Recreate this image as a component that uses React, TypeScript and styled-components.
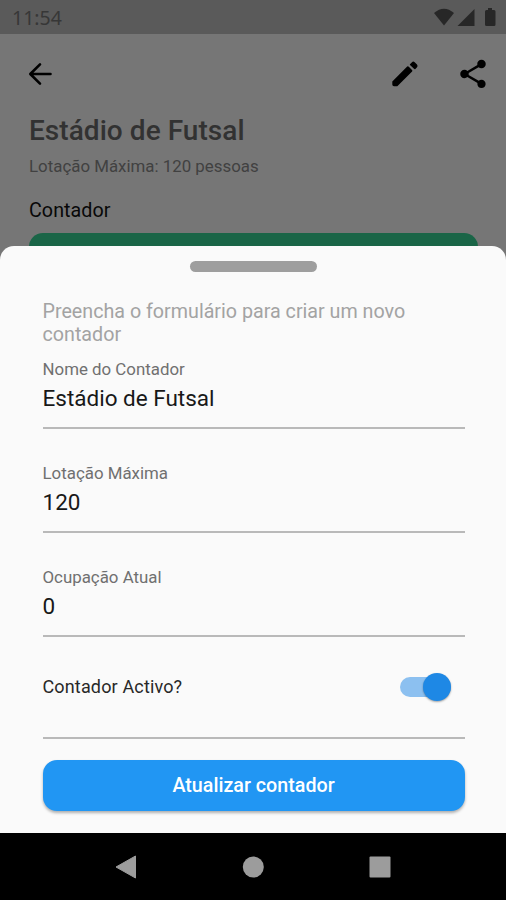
import React from "react";
import styled, { createGlobalStyle } from "styled-components";

const GlobalStyle = createGlobalStyle`
  * { box-sizing: border-box; }
  body { margin: 0; background: #767676; }
`;

const Screen = styled.div`
  width: 506px;
  height: 900px;
  display: flex;
  flex-direction: column;
  overflow: hidden;
  background: #767676;
  font-family: Roboto, sans-serif;
  white-space: nowrap;
`;

const StatusBar = styled.header`
  height: 34px;
  flex: none;
  display: flex;
  align-items: center;
  justify-content: space-between;
  padding: 2px 9px 0 12px;
  background: #5a5a5a;
  color: #373737;
`;

const Clock = styled.span`
  font: 400 19.5px/32px "Noto Sans", sans-serif;
`;

const StatusIcons = styled.svg`
  width: 63px;
  height: 20px;
  fill: #272727;
`;

const AppBar = styled.nav`
  height: 79px;
  flex: none;
  display: flex;
  align-items: center;
  padding: 0 16px 0 23px;
`;

const Icon = styled.svg`
  width: 34px;
  height: 34px;
  fill: #000;
`;

const Actions = styled.div`
  display: flex;
  gap: 34px;
  margin-left: auto;
`;

const Venue = styled.section`
  height: 134px;
  flex: none;
  padding: 1px 28px 0 29px;
`;

const Title = styled.h1`
  margin: 0;
  color: #323232;
  font-size: 28px;
  font-weight: 500;
  line-height: 34px;
  letter-spacing: 0.05px;
`;

const Subtitle = styled.p`
  margin: 7px 0 0;
  color: #414141;
  font-size: 16.87px;
  line-height: 22px;
`;

const SectionLabel = styled.h2`
  margin: 22px 0 0;
  color: #080808;
  font-size: 19.7px;
  font-weight: 400;
  line-height: 24px;
  letter-spacing: 0.05px;
`;

const CounterCard = styled.div`
  height: 14px;
  margin-top: 10px;
  border-radius: 14px 14px 0 0;
  background: #1a6547;
`;

const Sheet = styled.main`
  height: 587px;
  flex: none;
  margin-top: -1px;
  padding: 15px 41.5px 0 42.5px;
  border-radius: 14px 14px 0 0;
  background: #fafafa;
`;

const Handle = styled.div`
  width: 127px;
  height: 11px;
  margin: 0 auto;
  border-radius: 6px;
  background: #9e9e9e;
`;

const Intro = styled.p`
  margin: 28px 0 0;
  color: #a3a3a3;
  font-size: 19.7px;
  line-height: 23px;
  white-space: normal;
`;

const Field = styled.label<{ $gap: number }>`
  display: flex;
  flex-direction: column;
  height: 70px;
  margin-top: ${({ $gap }) => $gap}px;
  border-bottom: 2px solid #b9b9b9;
`;

const FieldName = styled.span`
  color: #707070;
  font-size: 16.87px;
  line-height: 20px;
`;

const Value = styled.input`
  width: 100%;
  height: 28px;
  margin-top: 5px;
  padding: 0;
  border: 0;
  outline: 0;
  background: transparent;
  color: #181818;
  font: 400 22.5px/28px Roboto, sans-serif;
`;

const SwitchRow = styled.div`
  height: 102px;
  display: flex;
  align-items: center;
  justify-content: space-between;
  padding-right: 13.5px;
  border-bottom: 2px solid #b9b9b9;
`;

const SwitchLabel = styled.span`
  margin-top: -1px;
  color: #282828;
  font-size: 18px;
  letter-spacing: 0.15px;
`;

const Track = styled.button`
  display: flex;
  justify-content: flex-end;
  align-items: center;
  width: 51px;
  height: 20px;
  padding: 0;
  border: 0;
  border-radius: 10px;
  background: #8cc0f0;
`;

const Thumb = styled.span`
  width: 28px;
  height: 28px;
  flex: none;
  border-radius: 50%;
  background: #1e88e5;
  box-shadow: 0 1px 2px rgba(0, 0, 0, 0.35);
`;

const Submit = styled.button`
  display: block;
  width: 422px;
  height: 50.5px;
  margin-top: 21px;
  padding: 2px 0 0;
  border: 0;
  border-radius: 14px;
  background: #2196f3;
  box-shadow: 0 2px 3px rgba(0, 0, 0, 0.3);
  color: #fff;
  font: 500 19.7px/48px Roboto, sans-serif;
`;

const NavBar = styled.footer`
  flex: 1;
  display: flex;
  align-items: center;
  justify-content: center;
  gap: 105px;
  background: #000;
`;

const NavIcon = styled.svg`
  width: 22px;
  height: 24px;
  fill: #9c9c9c;
`;

const fields = [
  { name: "Nome do Contador", value: "Estádio de Futsal", gap: 13 },
  { name: "Lotação Máxima", value: "120", gap: 34 },
  { name: "Ocupação Atual", value: "0", gap: 34 },
];

export default function App() {
  return (
    <>
      <GlobalStyle />
      <Screen>
        <StatusBar>
          <Clock>11:54</Clock>
          <StatusIcons viewBox="0 0 63 20">
            <path d="M0 5Q10 -3.5 20 5L10 17.5Z" />
            <path d="M40.5 1V18H23.5Z" />
            <path d="M54 0h4v2h2q1.5 0 1.5 1.5V16.5q0 1.5-1.5 1.5H52.5q-1.5 0-1.5-1.5V3.5Q51 2 52.5 2H54Z" />
          </StatusIcons>
        </StatusBar>
        <AppBar>
          <Icon viewBox="0 0 34 34">
            <path
              d="M27.500 17H8M17 7.300 7.300 17 17 26.700"
              fill="none"
              stroke="#000"
              strokeWidth="2.600"
              strokeLinecap="round"
              strokeLinejoin="round"
            />
          </Icon>
          <Actions>
            <Icon viewBox="0 0 34 34">
              <path d="M4.3 24.5 19.2 9.6Q20 8.9 20.8 9.7L24 12.9Q24.8 13.7 24.1 14.5L9.3 29.3H6Q4.3 29.3 4.3 27.6Z" />
              <path d="M22 7.3 24 5.2Q25.3 4 26.7 5.3L29 7.6Q30.2 9 29 10.3L27.4 11.9Q26.7 12.5 26 11.8L22 8Q21.7 7.6 22 7.3Z" />
            </Icon>
            <Icon viewBox="0 0 24 24">
              <path d="M18 16.08c-.76 0-1.44.3-1.96.77L8.91 12.7c.05-.23.09-.46.09-.7s-.04-.47-.09-.7l7.05-4.11c.54.5 1.25.81 2.04.81 1.66 0 3-1.34 3-3s-1.34-3-3-3-3 1.34-3 3c0 .24.04.47.09.7L8.04 9.81C7.5 9.31 6.79 9 6 9c-1.66 0-3 1.34-3 3s1.34 3 3 3c.79 0 1.5-.31 2.04-.81l7.12 4.16c-.05.21-.08.43-.08.65 0 1.61 1.31 2.92 2.92 2.92s2.92-1.31 2.92-2.92-1.31-2.92-2.92-2.92z" />
            </Icon>
          </Actions>
        </AppBar>
        <Venue>
          <Title>Estádio de Futsal</Title>
          <Subtitle>Lotação Máxima: 120 pessoas</Subtitle>
          <SectionLabel>Contador</SectionLabel>
          <CounterCard />
        </Venue>
        <Sheet>
          <Handle />
          <Intro>
            Preencha o formulário para criar um novo
            <br />
            contador
          </Intro>
          {fields.map((field) => (
            <Field key={field.name} $gap={field.gap}>
              <FieldName>{field.name}</FieldName>
              <Value defaultValue={field.value} />
            </Field>
          ))}
          <SwitchRow>
            <SwitchLabel>Contador Activo?</SwitchLabel>
            <Track role="switch" aria-checked="true">
              <Thumb />
            </Track>
          </SwitchRow>
          <Submit>Atualizar contador</Submit>
        </Sheet>
        <NavBar>
          <NavIcon viewBox="0 0 22 24">
            <path d="M1 12 20.5 1V23Z" stroke="#9c9c9c" strokeLinejoin="round" />
          </NavIcon>
          <NavIcon viewBox="0 0 22 24">
            <circle cx="11.3" cy="12" r="10.5" />
          </NavIcon>
          <NavIcon viewBox="0 0 22 24">
            <rect x=".5" y="1.5" width="21" height="21" rx="1" />
          </NavIcon>
        </NavBar>
      </Screen>
    </>
  );
}
